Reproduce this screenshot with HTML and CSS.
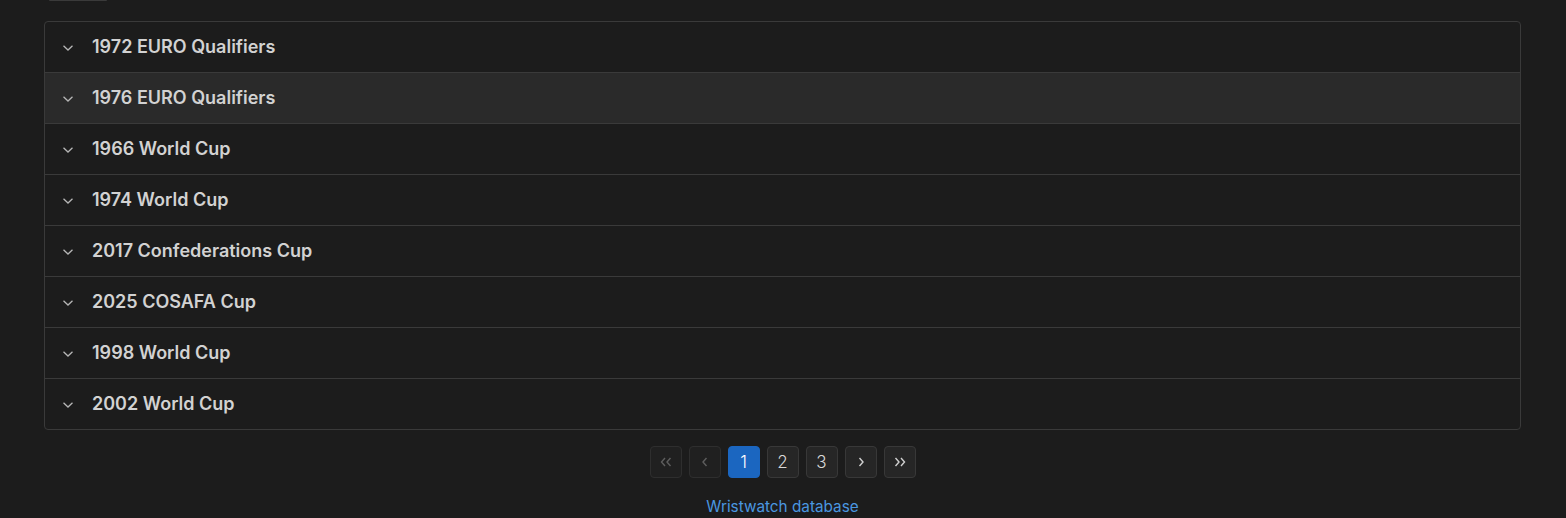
FILE: index.html
```html
<!DOCTYPE html>
<html lang="en">
<head>
    <meta charset="UTF-8">
    <meta name="viewport" content="width=device-width, initial-scale=1.0">
    <title>Tournaments</title>
    <link rel="stylesheet" href="styles.css">
</head>
<body>
    <div class="page">
        <div class="top-stub"></div>

        <div class="accordion">
            <div class="acc-item">
                <svg class="chev" viewBox="0 0 12 8" width="12" height="8"><path d="M1.5 1.8 L6 6 L10.5 1.8" /></svg>
                <span class="acc-title">1972 EURO Qualifiers</span>
            </div>
            <div class="acc-item hover">
                <svg class="chev" viewBox="0 0 12 8" width="12" height="8"><path d="M1.5 1.8 L6 6 L10.5 1.8" /></svg>
                <span class="acc-title">1976 EURO Qualifiers</span>
            </div>
            <div class="acc-item">
                <svg class="chev" viewBox="0 0 12 8" width="12" height="8"><path d="M1.5 1.8 L6 6 L10.5 1.8" /></svg>
                <span class="acc-title">1966 World Cup</span>
            </div>
            <div class="acc-item">
                <svg class="chev" viewBox="0 0 12 8" width="12" height="8"><path d="M1.5 1.8 L6 6 L10.5 1.8" /></svg>
                <span class="acc-title">1974 World Cup</span>
            </div>
            <div class="acc-item">
                <svg class="chev" viewBox="0 0 12 8" width="12" height="8"><path d="M1.5 1.8 L6 6 L10.5 1.8" /></svg>
                <span class="acc-title">2017 Confederations Cup</span>
            </div>
            <div class="acc-item">
                <svg class="chev" viewBox="0 0 12 8" width="12" height="8"><path d="M1.5 1.8 L6 6 L10.5 1.8" /></svg>
                <span class="acc-title">2025 COSAFA Cup</span>
            </div>
            <div class="acc-item">
                <svg class="chev" viewBox="0 0 12 8" width="12" height="8"><path d="M1.5 1.8 L6 6 L10.5 1.8" /></svg>
                <span class="acc-title">1998 World Cup</span>
            </div>
            <div class="acc-item">
                <svg class="chev" viewBox="0 0 12 8" width="12" height="8"><path d="M1.5 1.8 L6 6 L10.5 1.8" /></svg>
                <span class="acc-title">2002 World Cup</span>
            </div>
        </div>

        <nav class="pager">
            <button class="pg disabled" aria-label="First">
                <svg viewBox="0 0 14 12" width="14" height="12"><path d="M6 2 L2.5 6 L6 10 M11.5 2 L8 6 L11.5 10" /></svg>
            </button>
            <button class="pg disabled" aria-label="Previous">
                <svg viewBox="0 0 14 12" width="14" height="12"><path d="M8.5 2 L5 6 L8.5 10" /></svg>
            </button>
            <button class="pg active">1</button>
            <button class="pg">2</button>
            <button class="pg">3</button>
            <button class="pg" aria-label="Next">
                <svg viewBox="0 0 14 12" width="14" height="12"><path d="M5.5 2 L9 6 L5.5 10" /></svg>
            </button>
            <button class="pg" aria-label="Last">
                <svg viewBox="0 0 14 12" width="14" height="12"><path d="M2.5 2 L6 6 L2.5 10 M8 2 L11.5 6 L8 10" /></svg>
            </button>
        </nav>

        <footer class="footer">
            <a href="#">Wristwatch database</a>
        </footer>
    </div>
</body>
</html>
```

FILE: styles.css
```css
/* General */
body {
    margin: 0;
    padding: 0;
    background: #1c1c1c;
    font-family: "Inter", "Noto Sans", Arial, sans-serif;
    color: #d4d4d4;
}

.page {
    padding: 0 45px 0 44px;
}

/* bit of a control scrolled off the top */
.top-stub {
    width: 58px;
    height: 1px;
    margin-left: 5px;
    margin-bottom: 20px;
    background: #3a3a3a;
    border-radius: 0 0 4px 4px;
}

/* Accordion */
.accordion {
    border: 1px solid #3a3a3a;
    border-radius: 4px;
    overflow: hidden;
    background: #1c1c1c;
}

.acc-item {
    display: flex;
    align-items: center;
    height: 50px;
    padding-left: 17px;
    border-top: 1px solid #3a3a3a;
}

.acc-item:first-child {
    border-top: none;
}

.acc-item.hover {
    background: #2a2a2a;
}

.chev {
    fill: none;
    stroke: #b4b4b4;
    stroke-width: 1.3;
    margin-right: 18px;
    margin-top: 1px;
}

.acc-title {
    font-size: 18px;
    font-weight: 600;
    color: #d2d2d2;
    padding-bottom: 2px;
}

/* Pagination */
.pager {
    display: flex;
    justify-content: center;
    gap: 7px;
    margin-top: 16px;
}

.pg {
    width: 32px;
    height: 32px;
    padding: 0;
    display: flex;
    align-items: center;
    justify-content: center;
    background: #262626;
    border: 1px solid #383838;
    border-radius: 4px;
    color: #d8d8d8;
    font-family: "Inter", "Noto Sans", Arial, sans-serif;
    font-size: 17px;
    font-weight: 300;
    cursor: pointer;
}

.pg svg {
    fill: none;
    stroke: #d0d0d0;
    stroke-width: 1.4;
}

.pg.disabled {
    background: #202020;
    border-color: #2e2e2e;
    cursor: default;
}

.pg.disabled svg {
    stroke: #5e5e5e;
}

.pg.active {
    background: #1b66c0;
    border-color: #1b66c0;
    color: #ffffff;
}

/* Footer */
.footer {
    text-align: center;
    margin-top: 18px;
}

.footer a {
    color: #4a97e0;
    text-decoration: none;
    font-size: 15.3px;
}
```
